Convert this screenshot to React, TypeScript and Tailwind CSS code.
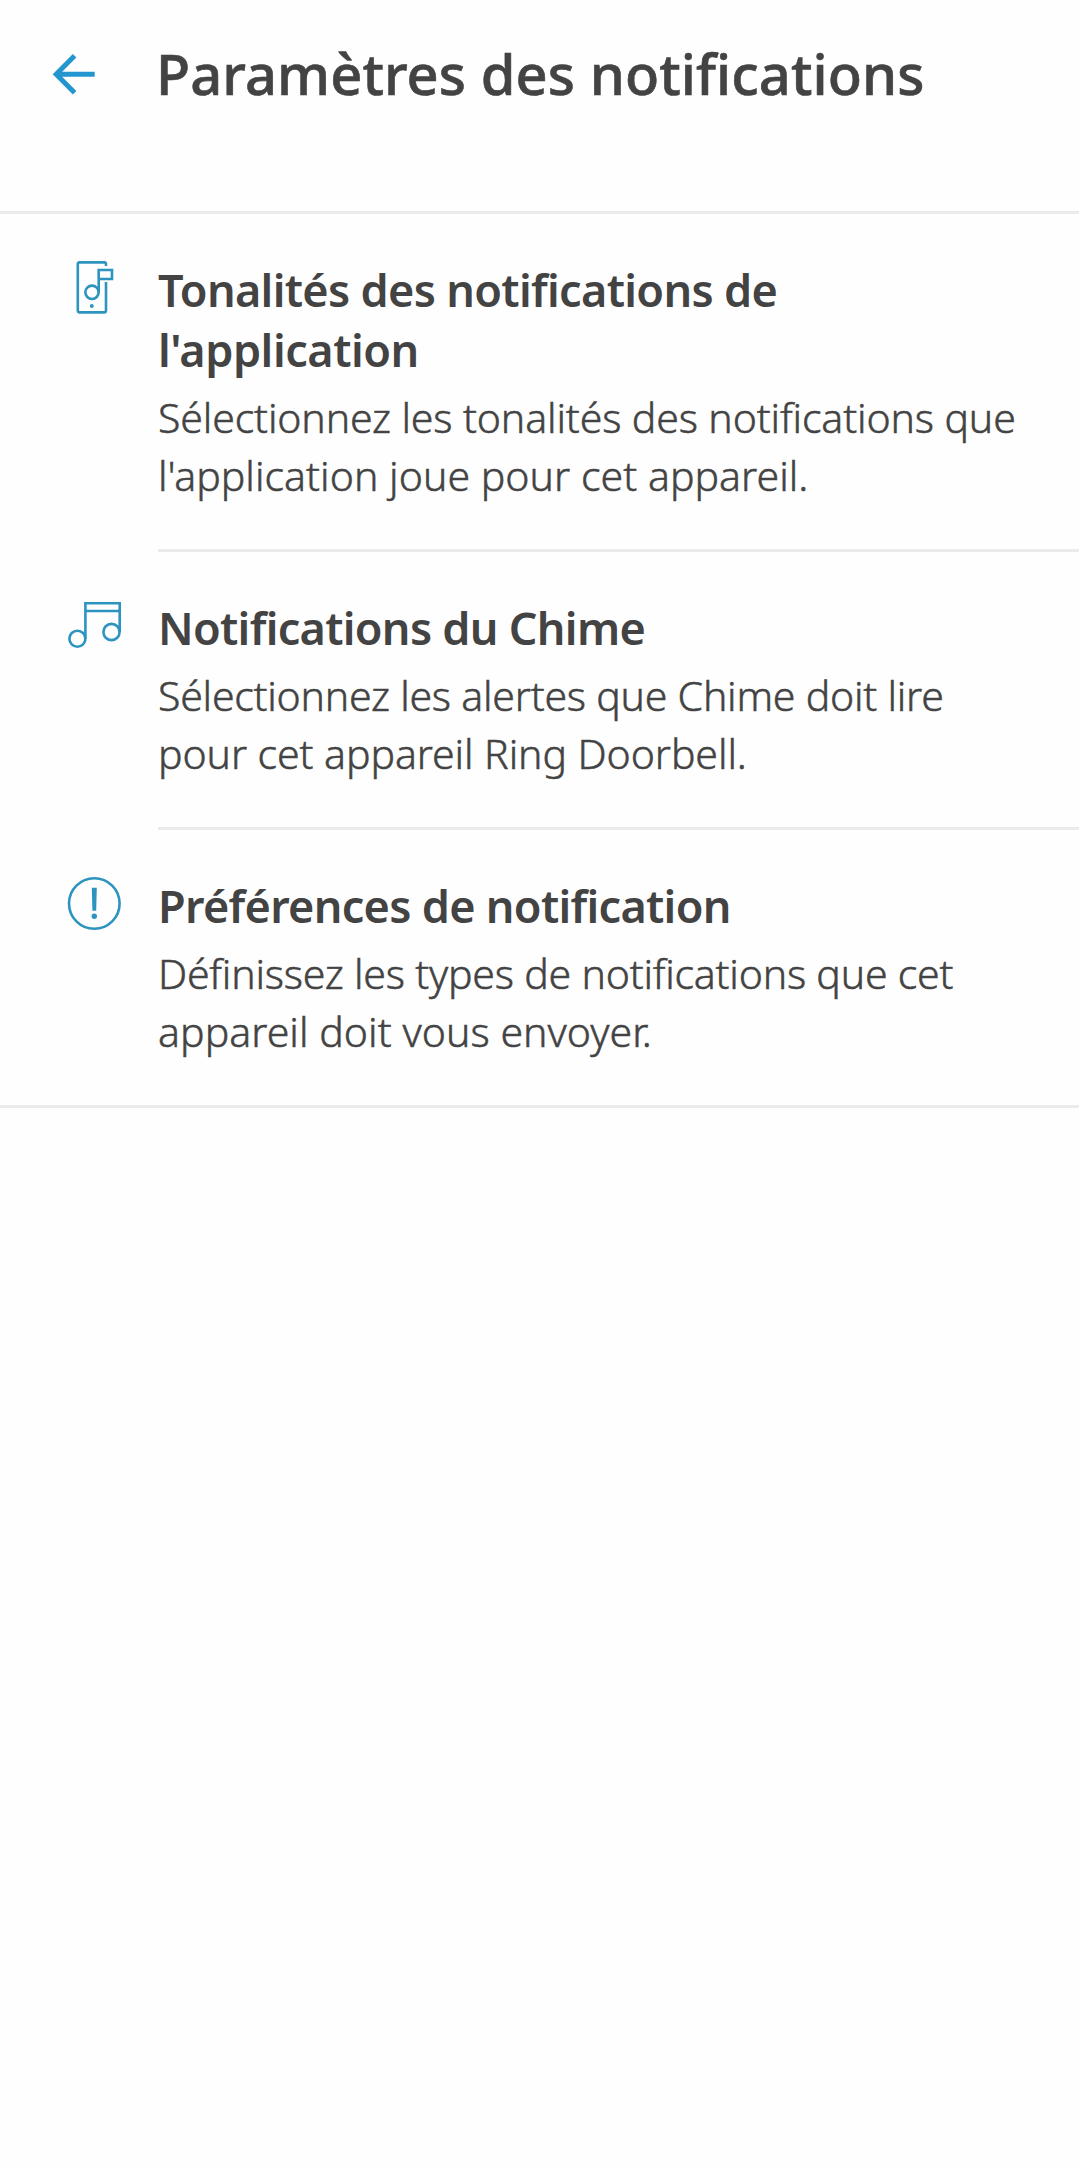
import React from 'react';

type Line = { text: string; className: string };

type Setting = {
  id: string;
  icon: React.ReactNode;
  title: Line[];
  description: Line[];
};

const PhoneToneIcon = () => (
  <svg className="size-16" viewBox="0 0 64 64" fill="none" stroke="currentColor" strokeWidth="2.6">
    <path d="M44 10V8.2Q44 6.4 42.2 6.4H17.6Q15.8 6.4 15.8 8.2V54.6Q15.8 56.4 17.6 56.4H42.2Q44 56.4 44 54.6V26" />
    <path d="M36.7 36.3V14H50V23H36.7" />
    <circle cx="30" cy="36.3" r="6.7" />
    <circle cx="29.8" cy="50" r="1.9" fill="currentColor" stroke="none" />
  </svg>
);

const MusicIcon = () => (
  <svg className="size-16" viewBox="0 0 64 64" fill="none" stroke="currentColor" strokeWidth="2.6">
    <path d="M23.4 44.7V9.2H57.7V38M23.4 17H57.7" />
    <circle cx="15.4" cy="44.7" r="8" />
    <circle cx="49.5" cy="38" r="8.1" />
  </svg>
);

const AlertIcon = () => (
  <svg className="size-16" viewBox="0 0 64 64" fill="none" stroke="currentColor" strokeWidth="2.6">
    <circle cx="32.3" cy="31.5" r="25.3" />
    <path d="M29.8 15.7H34.8L34.2 38.7H30.4Z" fill="currentColor" stroke="none" />
    <circle cx="32.3" cy="44.3" r="2.7" fill="currentColor" stroke="none" />
  </svg>
);

const SETTINGS: Setting[] = [
  {
    id: 'tones',
    icon: <PhoneToneIcon />,
    title: [
      { text: 'Tonalités des notifications de', className: 'tracking-[-0.67px]' },
      { text: "l'application", className: 'tracking-[-0.45px]' },
    ],
    description: [
      { text: 'Sélectionnez les tonalités des notifications que', className: 'tracking-[-0.13px]' },
      { text: "l'application joue pour cet appareil.", className: 'tracking-[0.04px]' },
    ],
  },
  {
    id: 'chime',
    icon: <MusicIcon />,
    title: [{ text: 'Notifications du Chime', className: 'tracking-[-0.7px]' }],
    description: [
      { text: 'Sélectionnez les alertes que Chime doit lire', className: 'tracking-[-0.23px]' },
      { text: 'pour cet appareil Ring Doorbell.', className: 'tracking-[-0.08px]' },
    ],
  },
  {
    id: 'preferences',
    icon: <AlertIcon />,
    title: [{ text: 'Préférences de notification', className: 'tracking-[-0.7px]' }],
    description: [
      { text: 'Définissez les types de notifications que cet', className: 'tracking-[-0.21px]' },
      { text: 'appareil doit vous envoyer.', className: 'tracking-[0.05px]' },
    ],
  },
];

function Lines({ lines }: { lines: Line[] }) {
  return (
    <>
      {lines.map((line) => (
        <span key={line.text} className={`block whitespace-nowrap ${line.className}`}>
          {line.text}
        </span>
      ))}
    </>
  );
}

function SettingRow({ setting, last }: { setting: Setting; last: boolean }) {
  return (
    <li className={`flex gap-8 pl-[62px] ${last ? 'border-b-[3px] border-[#ebebeb]' : ''}`}>
      <div className="shrink-0 pt-[42px] text-[#2d93bf]">{setting.icon}</div>
      <div className={`flex-1 pt-[46px] pb-[45px] ${last ? '' : 'border-b-[3px] border-[#ebebeb]'}`}>
        <h2 className="text-[45px] leading-[60px] font-semibold">
          <Lines lines={setting.title} />
        </h2>
        <p className="mt-2 text-[41px] leading-[58px] font-light [-webkit-text-stroke:0.5px_#434343]">
          <Lines lines={setting.description} />
        </p>
      </div>
    </li>
  );
}

export default function App() {
  return (
    <div className="min-h-screen bg-[#fefefe] font-['Noto_Sans',sans-serif] text-[#434343]">
      <header className="flex h-[214px] items-start border-b-[3px] border-[#ebebeb] pl-[50px]">
        <button className="mt-[50px] mr-[58px] text-[#2496cf]" aria-label="Retour">
          <svg className="size-12" viewBox="0 0 48 48" fill="none" stroke="currentColor" strokeWidth="5">
            <path d="M24.6 5.8L6.2 24.3L24.6 42.8M6.2 24.3H44.7" />
          </svg>
        </button>
        <h1 className="mt-[43px] text-[56px] leading-[60px] font-medium tracking-[0.08px] whitespace-nowrap [-webkit-text-stroke:0.6px_#434343]">
          Paramètres des notifications
        </h1>
      </header>
      <ul>
        {SETTINGS.map((setting, idx) => (
          <SettingRow key={setting.id} setting={setting} last={idx === SETTINGS.length - 1} />
        ))}
      </ul>
    </div>
  );
}
